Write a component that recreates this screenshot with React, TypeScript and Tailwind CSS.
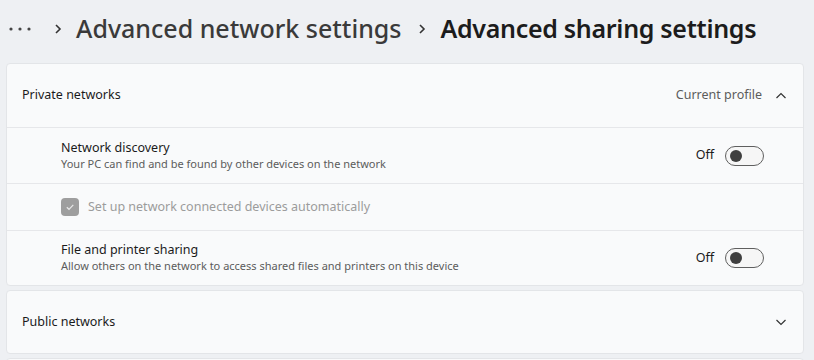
import React from 'react'

const font = { fontFamily: '"Noto Sans", "Open Sans", sans-serif' }

const Toggle = () => (
  <div className="flex items-center gap-[11px]">
    <span className="text-[12.5px] text-[#1b1b1b]">Off</span>
    <div className="w-[39px] h-[20px] rounded-full border border-[#5f5f5f] bg-[#f6f6f6] flex items-center px-[4px]">
      <div className="w-[12px] h-[12px] rounded-full bg-[#3f3f3f]"></div>
    </div>
  </div>
)

const ChevronUp = () => (
  <svg width="12" height="12" viewBox="0 0 12 12" fill="none" stroke="#333" strokeWidth="1.2">
    <path d="M1.5 8 L6 3.5 L10.5 8" />
  </svg>
)

const ChevronDown = () => (
  <svg width="12" height="12" viewBox="0 0 12 12" fill="none" stroke="#333" strokeWidth="1.2">
    <path d="M1.5 4 L6 8.5 L10.5 4" />
  </svg>
)

const Crumb = () => (
  <svg width="10" height="12" viewBox="0 0 10 12" fill="none" stroke="#333" strokeWidth="1.6">
    <path d="M3 2 L7 6 L3 10" />
  </svg>
)

const App = () => {
  return (
    <div className="w-[814px] h-[360px] overflow-hidden bg-[#eef0f3]" style={font}>
      {/* breadcrumb */}
      <div className="h-[57px] flex items-center pl-[9px] text-[25px] text-[#1c1c1c]">
        <svg width="22" height="6" viewBox="0 0 22 6" fill="#444">
          <circle cx="2" cy="3" r="1.6" />
          <circle cx="11" cy="3" r="1.6" />
          <circle cx="20" cy="3" r="1.6" />
        </svg>
        <span className="ml-[22px]"><Crumb /></span>
        <span className="ml-[13px] font-medium text-[#3a3a3a]">Advanced network settings</span>
        <span className="ml-[16px]"><Crumb /></span>
        <span className="ml-[13px] font-semibold tracking-[-0.3px]">Advanced sharing settings</span>
      </div>

      <div className="px-[6px] pr-[10px] pt-[6px] flex flex-col gap-[4px]">
        {/* private networks */}
        <div className="bg-[#f9fafb] rounded-[4px] border border-[#e3e5e8]">
          <div className="h-[63px] flex items-center justify-between pl-[15px] pr-[16px]">
            <span className="text-[12.5px] text-[#1b1b1b]">Private networks</span>
            <div className="flex items-center gap-[13px]">
              <span className="text-[12.5px] text-[#5c5c5c]">Current profile</span>
              <ChevronUp />
            </div>
          </div>
          <div className="h-[56px] border-t border-[#e6e7ea] flex items-center justify-between pl-[54px] pr-[39px]">
            <div className="flex flex-col leading-[16px]">
              <span className="text-[12.5px] text-[#1b1b1b]">Network discovery</span>
              <span className="text-[11px] text-[#5c5c5c]">Your PC can find and be found by other devices on the network</span>
            </div>
            <Toggle />
          </div>
          <div className="h-[47px] border-t border-[#e6e7ea] flex items-center pl-[54px]">
            <div className="w-[18px] h-[18px] rounded-[4px] bg-[#9e9e9e] flex items-center justify-center">
              <svg width="10" height="10" viewBox="0 0 10 10" fill="none" stroke="#e8e8e8" strokeWidth="1.2">
                <path d="M1.8 5.2 L4 7.3 L8.3 2.8" />
              </svg>
            </div>
            <span className="ml-[9px] text-[12.5px] text-[#9c9c9c]">Set up network connected devices automatically</span>
          </div>
          <div className="h-[55px] border-t border-[#e6e7ea] flex items-center justify-between pl-[54px] pr-[39px]">
            <div className="flex flex-col leading-[16px]">
              <span className="text-[12.5px] text-[#1b1b1b]">File and printer sharing</span>
              <span className="text-[11px] text-[#5c5c5c]">Allow others on the network to access shared files and printers on this device</span>
            </div>
            <Toggle />
          </div>
        </div>

        {/* public networks */}
        <div className="h-[64px] bg-[#f9fafb] rounded-[4px] border border-[#e3e5e8] flex items-center justify-between pl-[15px] pr-[16px]">
          <span className="text-[12.5px] text-[#1b1b1b]">Public networks</span>
          <ChevronDown />
        </div>

        <div className="h-[40px] bg-[#f9fafb] rounded-[4px] border border-[#e3e5e8]"></div>
      </div>
    </div>
  )
}

export default App
